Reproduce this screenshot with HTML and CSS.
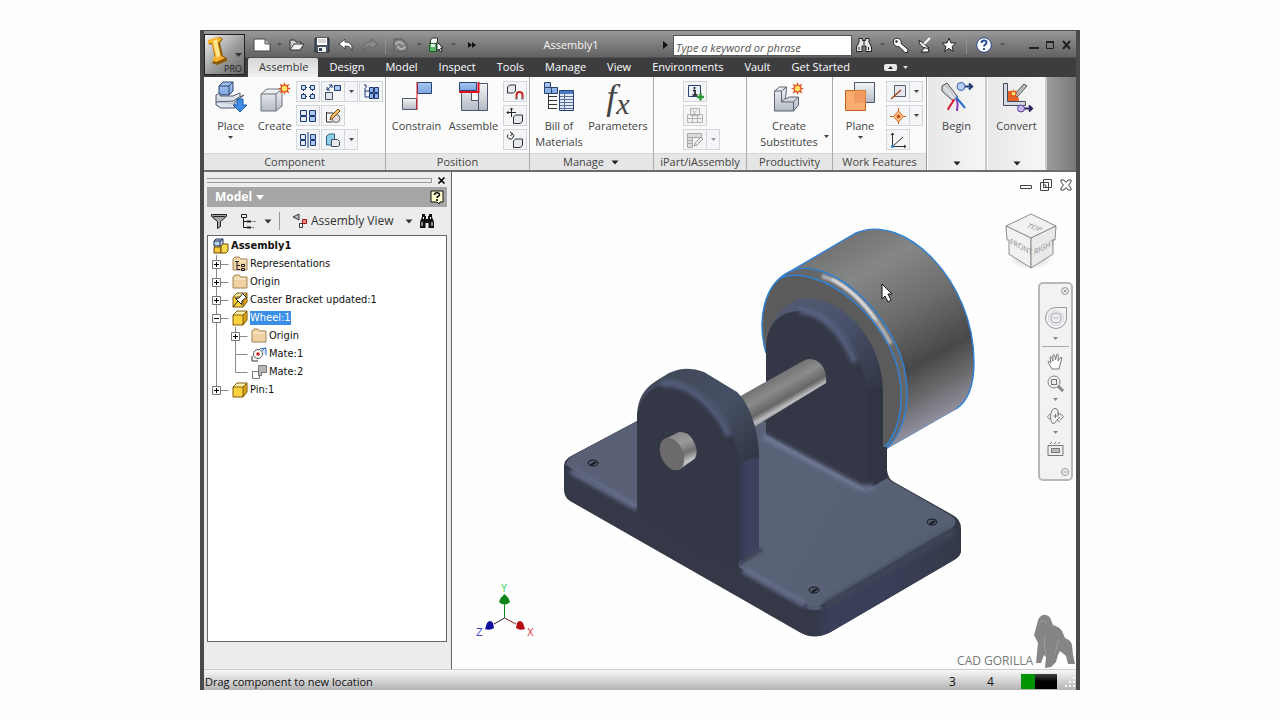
FILE: index.html
```html
<!DOCTYPE html>
<html lang="en">
<head>
<meta charset="utf-8">
<title>Assembly1</title>
<link rel="stylesheet" href="styles.css">
</head>
<body>
<svg class="defs" aria-hidden="true">
  <defs>
    <linearGradient id="cubeGray" x1="0" y1="0" x2="0" y2="1"><stop offset="0" stop-color="#f4f5f7"/><stop offset="1" stop-color="#b4bac4"/></linearGradient>
    <linearGradient id="blueFill" x1="0" y1="0" x2="0" y2="1"><stop offset="0" stop-color="#a9c8f2"/><stop offset="1" stop-color="#7ea6e0"/></linearGradient>
    <symbol id="dd" viewBox="0 0 7 5"><path d="M1 1h5L3.500 4z" fill="currentColor"/></symbol>
    <symbol id="burst" viewBox="0 0 12 12"><path d="M6 0l1.200 3L10.500 1.500 9 4.800 12 6 9 7.200l1.500 3.300L7.200 9 6 12 4.800 9l-3.300 1.500L3 7.200 0 6l3-1.200L1.500 1.500 4.800 3z" fill="#e0531c"/><circle cx="6" cy="6" r="2.500" fill="#ffe46a"/></symbol>
    <symbol id="part" viewBox="0 0 16 16"><path d="M1 5l4-4h10v9l-4 5H1z" fill="#fbd23c"/><path d="M1 5l4-4h10l-4 4z" fill="#fff3b0"/><path d="M11 5l4-4v9l-4 5z" fill="#dfa318"/><path d="M1 5l4-4h10v9l-4 5H1zM1 5h10v10M11 5l4-4" fill="none" stroke="#7c5c10"/></symbol>
    <symbol id="folder" viewBox="0 0 16 16"><path d="M1 14V3l2-2h4l2 2h6v11z" fill="#f0d3a2" stroke="#a08458"/><path d="M2 5h12" stroke="#fff2d8"/></symbol>
    <symbol id="binoc" viewBox="0 0 16 14"><path d="M3 0h3v2h1v3h2V2h1V0h3v3l2 5v6H9.500V9h-3v5H1V8l2-5z" fill="currentColor"/><path d="M3 8v4M13 8v4M4.500 3v2M11.500 3v2" stroke="#fff"/></symbol>
    <symbol id="plusbox" viewBox="0 0 24 18"><path d="M8.500 0v18M8.500 9.500h12" stroke="#8c8c8c"/><path d="M4.500 5.500h8v8h-8z" fill="#fff" stroke="#777"/><path d="M6 9.500h5M8.500 7v5" stroke="#000"/></symbol>
  </defs>
</svg>
<div class="stage">
<main class="app">
  <header class="head">
    <button class="app-btn" aria-label="Application menu">
      <svg viewBox="0 0 39 38" width="39" height="38"><path d="M4 5l11-4 3 2-3 4 3 13 4 2v3l-10 4-5-2 3-4L7 8 4 9z" fill="#8a5a08"/><path d="M3 4l10-3 4 2-4 4 3 13 4 2-9 4-4-2 3-4L7 7 3 8z" fill="#fbb42c"/><path d="M8 5l4-2 3 17-3 2z" fill="#ffe690"/><path d="M30 17h7l-3.500 4z" fill="#333"/></svg>
      <span>PRO</span>
    </button>
    <div class="title">
      <button class="w22" aria-label="New"><svg width="18" height="14" viewBox="0 0 18 14"><path d="M1 1h11l5 5v7H1z" fill="#fff" stroke="#444"/><path d="M12 1v5h5" fill="#bbb" stroke="#555"/></svg></button>
      <button class="w12 dim" aria-label="New options"><svg width="7" height="5"><use href="#dd"/></svg></button>
      <button class="w24" aria-label="Open"><svg width="16" height="14" viewBox="0 0 16 14"><path d="M1 12V2h5l1 2h5v3" fill="#ccc" stroke="#333"/><path d="M1 12l4-6h10l-4 6z" fill="#f4f4f4" stroke="#333"/></svg></button>
      <button class="w26" aria-label="Save"><svg width="16" height="16" viewBox="0 0 16 16"><path d="M1 1h14v14H1z" fill="#4a5464" stroke="#222b38"/><path d="M3 1h10v7H3z" fill="#fff"/><path d="M4 3h8M4 5h8" stroke="#aaa"/><path d="M4 10h8v5H4z" fill="#eee"/><path d="M5 11h3v3H5z" fill="#334055"/></svg></button>
      <button class="w22" aria-label="Undo"><svg width="16" height="14" viewBox="0 0 16 14"><path d="M7 1v3c5 0 8 3 7 9-1-4-3-5-7-5v3L1 6z" fill="#fff" stroke="#444"/></svg></button>
      <button class="w26" aria-label="Redo"><svg width="16" height="14" viewBox="0 0 16 14"><path d="M9 1v3C4 4 1 7 2 13c1-4 3-5 7-5v3l6-5z" fill="#8c8c8c" stroke="#666"/></svg></button>
      <span class="sep"></span>
      <button class="w24" aria-label="Update"><svg width="16" height="14" viewBox="0 0 16 14"><path d="M1 1h8l5 5v7H1z" fill="#7d7d7d" stroke="#5c5c5c"/><path d="M3 7c0-4 6-4 7 0M12 8c-1 4-6 4-7 0" fill="none" stroke="#b0b0b0" stroke-width="2"/></svg></button>
      <button class="w12 dim" aria-label="Update options"><svg width="7" height="5"><use href="#dd"/></svg></button>
      <button class="w22" aria-label="Select"><svg width="16" height="16" viewBox="0 0 16 16"><path d="M2.500 3l2-2h5v9h-7z" fill="#f4f4f4" stroke="#333"/><path d="M1.500 6.500h7v8h-7z" fill="#58b868" stroke="#1c5a26"/><path d="M3 7h4v3H3z" fill="#e8f4e8"/><path d="M9 5v9l2-2 1.500 3 1.500-1-1.500-3H15z" fill="#fff" stroke="#222"/></svg></button>
      <button class="w12 dim" aria-label="Select options"><svg width="7" height="5"><use href="#dd"/></svg></button>
      <button class="w26" aria-label="More"><svg width="8" height="6" viewBox="0 0 8 6"><path d="M0 0l4 3-4 3zM4 0l4 3-4 3z" fill="#111"/></svg></button>
      <h1>Assembly1</h1>
      <button class="w16" aria-label="Toggle search"><svg width="5" height="8" viewBox="0 0 5 8"><path d="M0 0l5 4-5 4z" fill="#111"/></svg></button>
      <input class="search" type="search" aria-label="Search" placeholder="Type a keyword or phrase">
      <button class="w24" aria-label="Find"><svg width="16" height="14" viewBox="0 0 16 14"><path d="M3 .5h3.500v2h3v-2H13V4l2.500 5v4.500H10V8H6v5.500H.5V9L3 4z" fill="#e6e6e6" stroke="#222"/><path d="M3 9v3M12.500 9v3M8 3v4" stroke="#222"/></svg></button>
      <button class="w12 dim" aria-label="Find options"><svg width="7" height="5"><use href="#dd"/></svg></button>
      <button class="w26" aria-label="Subscription"><svg width="18" height="16" viewBox="0 0 18 16"><path d="M1.500 4C2 1 6 .5 8 2.500c1.500 1.500 1.300 3 1 4l7 6-.5 3h-2.500L7 9.500C3 10 1 7 1.500 4z" fill="#fff" stroke="#222"/><circle cx="4.500" cy="4.500" r="1.200" fill="#222"/></svg></button>
      <button class="w22" aria-label="Communication"><svg width="14" height="16" viewBox="0 0 14 16"><path d="M1 3c0 6 5 9 10 8zM7 10l-4 5h8l-1-4" fill="#f4f4f4" stroke="#222"/><path d="M6 7l6-6" stroke="#fff" stroke-width="2"/></svg></button>
      <button class="w26" aria-label="Favorites"><svg width="16" height="16" viewBox="0 0 16 16"><path d="M8 1l2 5h5l-4 3.500 1.500 5L8 11.500l-4.500 3 1.500-5L1 6h5z" fill="#fff" stroke="#222"/></svg></button>
      <span class="sep gap"></span>
      <button class="w24" aria-label="Help"><svg width="16" height="16" viewBox="0 0 16 16"><circle cx="8" cy="8" r="7.300" fill="#fff" stroke="#27468a"/><path d="M5.500 6c0-3.500 5-3 5-.5C10.500 7.500 8 7.500 8 9.500M8 11v2" fill="none" stroke="#27509c" stroke-width="2"/></svg></button>
      <button class="w12 dim" aria-label="Help options"><svg width="7" height="5"><use href="#dd"/></svg></button>
      <span class="win">
        <button aria-label="Minimize"><svg width="10" height="9" viewBox="0 0 10 9"><path d="M0 7h10v2H0z" fill="#222"/></svg></button>
        <button aria-label="Maximize"><svg width="8" height="8" viewBox="0 0 8 8"><path d="M.5 1h7v6.500h-7z" fill="none" stroke="#222"/><path d="M0 1h8" stroke="#222" stroke-width="2"/></svg></button>
        <button aria-label="Close"><svg width="9" height="8" viewBox="0 0 9 8"><path d="M1 0l7 8M8 0L1 8" stroke="#222" stroke-width="2"/></svg></button>
      </span>
    </div>
    <nav class="tabs">
      <a class="on" href="#">Assemble</a><a href="#">Design</a><a href="#">Model</a><a href="#">Inspect</a><a href="#">Tools</a><a href="#">Manage</a><a href="#">View</a><a href="#">Environments</a><a href="#">Vault</a><a href="#">Get Started</a>
      <button class="collapse" aria-label="Collapse ribbon"><svg width="24" height="8" viewBox="0 0 24 8"><rect x="0" y="0" width="13" height="7" rx="2" fill="#e8e8e8"/><path d="M4 5l2.500-3L9 5z" fill="#222"/><path d="M19 2h5l-2.500 3z" fill="#ddd"/></svg></button>
    </nav>
  </header>

  <section class="ribbon">
    <section class="panel component">
      <div class="tools">
        <button class="big"><svg viewBox="0 0 32 32"><path d="M4 5l4-4h10v9l-4 4H4z" fill="url(#blueFill)" stroke="#28426f"/><path d="M4 5h10v9M14 5l4-4" fill="none" stroke="#28426f"/><path d="M1 14l4-2v3h13l7-3v4l4-2-9 7v4H5l-4-4z" fill="url(#cubeGray)" stroke="#4d5870"/><path d="M1 21l17-1 8-5M1 21v3l5 3h14v-3" fill="#dfe5ef" stroke="#4d5870"/><path d="M22 18h6v6h4l-7 7-7-7h4z" fill="#3d8de6" stroke="#1c5aa8"/></svg><span>Place</span><svg class="arrow"><use href="#dd"/></svg></button>
        <button class="big"><svg viewBox="0 0 32 32"><path d="M2 13l6-5h15v17l-6 5H2z" fill="url(#cubeGray)"/><path d="M2 13l6-5h15v17l-6 5H2zM2 13h15v17M17 13l6-5" fill="none" stroke="#6c727c"/><use href="#burst" x="19" y="1" width="13" height="13"/></svg><span>Create</span></button>
        <div class="stack">
          <div><button class="sm" aria-label="Pattern"><svg viewBox="0 0 18 18"><g fill="#cfe0f6" stroke="#1e3a74"><path d="M2.500 2.500h4v4h-4zM11.500 2.500h4v4h-4zM2.500 11.500h4v4h-4zM11.500 11.500h4v4h-4z"/></g><path d="M7 4.500h1M10 4.500h1M7 13.500h1M10 13.500h1M4.500 7v1M4.500 10v1M13.500 7v1M13.500 10v1" stroke="#1e3a74"/></svg></button><button class="sm" aria-label="Move"><svg viewBox="0 0 18 18"><path d="M1.500 9.500h7v7h-7z" fill="#dfe4ec" stroke="#444b5c"/><path d="M10.500 2.500h6v5h-6z" fill="#a9c8f2" stroke="#1e3a74"/><path d="M3 7l5-5M5 2h3v3M3 4v3h3" fill="none" stroke="#1e3a74"/></svg></button><button class="dd" aria-label="Move options"><svg class="arrow"><use href="#dd"/></svg></button><button class="sm" aria-label="Structure"><svg viewBox="0 0 18 18"><path d="M3 5v9h5M3 8h5M2 2h2v3" fill="none" stroke="#1e3a74"/><path d="M7.500 4.500h4v5h-4zM12.500 4.500h4v5h-4zM7.500 10.500h4v5h-4zM12.500 10.500h4v5h-4z" fill="#8fb2e6" stroke="#1e3a74"/></svg></button></div>
          <div><button class="sm" aria-label="Copy"><svg viewBox="0 0 18 18"><path d="M1.500 3.500h6v5h-6zM1.500 9.500h6v5h-6z" fill="#e4eaf4" stroke="#1e3a74"/><path d="M10.500 3.500h6v5h-6zM10.500 9.500h6v5h-6z" fill="#a9c8f2" stroke="#1e3a74"/></svg></button><button class="sm" aria-label="Sketch"><svg viewBox="0 0 18 18"><path d="M2.500 5v10M2.500 6h7M2.500 15h6" stroke="#333" fill="none"/><circle cx="12" cy="11.500" r="4" fill="#ddd" stroke="#666"/><path d="M6 13l1-4 7-7 2 2-7 7z" fill="#f6c46a" stroke="#7a4d14"/></svg></button></div>
          <div><button class="sm" aria-label="Mirror"><svg viewBox="0 0 18 18"><path d="M1.500 3.500h5v5h-5zM1.500 9.500h5v5h-5z" fill="#e4eaf4" stroke="#1e3a74"/><path d="M11.500 3.500h5v5h-5zM11.500 9.500h5v5h-5z" fill="#a9c8f2" stroke="#1e3a74"/><path d="M9 1v16" stroke="#1e3a74"/></svg></button><button class="sm" aria-label="Shrinkwrap"><svg viewBox="0 0 18 18"><path d="M2.500 5l3-2h5v11h-8z" fill="#8fd0e8" stroke="#2a5f80"/><path d="M7.500 8.500h6l2 2v4l-2 1h-6z" fill="#e6e9ef" stroke="#444b5c"/></svg></button><button class="dd" aria-label="Shrinkwrap options"><svg class="arrow"><use href="#dd"/></svg></button></div>
        </div>
      </div>
      <h2>Component</h2>
    </section>
    <section class="panel position">
      <div class="tools">
        <button class="big"><svg viewBox="0 0 32 32"><path d="M1.500 17.500h14v11h-14z" fill="url(#cubeGray)" stroke="#4d5870"/><path d="M16.500 1.500h14v11h-14z" fill="url(#blueFill)" stroke="#28426f"/><path d="M16 1v28" stroke="#e01020"/></svg><span>Constrain</span></button>
        <button class="big"><svg viewBox="0 0 32 32"><path d="M3.500 10.500h10v9h7v-17h9v27h-26z" fill="url(#cubeGray)" stroke="#4d5870"/><path d="M13.500 14v5.500h7v10" fill="none" stroke="#4d5870"/><path d="M1.500 1.500h17v8h-17z" fill="url(#blueFill)" stroke="#28426f"/><path d="M1 11h19.500V1" fill="none" stroke="#e01020" stroke-width="2"/></svg><span>Assemble</span></button>
        <div class="stack">
          <div><button class="sm" aria-label="Grip snap"><svg viewBox="0 0 18 18"><path d="M1.500 4l2-2h6v6l-2 2h-6z" fill="#e6e9ef" stroke="#333"/><path d="M10.500 16v-4a3 3 0 0 1 6 0v4" fill="none" stroke="#c22a22" stroke-width="2"/><path d="M9 15.500h3M15 15.500h3" stroke="#888" stroke-width="2"/></svg></button></div>
          <div><button class="sm" aria-label="Move component"><svg viewBox="0 0 18 18"><path d="M7.500 10l2-2h7v6l-2 2.500h-7z" fill="#e6e9ef" stroke="#333"/><path d="M5.500 1v9M1 5.500h9M4 2.500l1.500-1.500L7 2.500M2.500 4L1 5.500 2.500 7" fill="none" stroke="#222"/></svg></button></div>
          <div><button class="sm" aria-label="Rotate component"><svg viewBox="0 0 18 18"><path d="M7.500 10l2-2h7v6l-2 2.500h-7z" fill="#e6e9ef" stroke="#333"/><path d="M6 2.500a3 3 0 1 1-4 1M4 1l2.500 1.500L4.500 5" fill="none" stroke="#222"/></svg></button></div>
        </div>
      </div>
      <h2>Position</h2>
    </section>
    <section class="panel manage">
      <div class="tools">
        <button class="big"><svg viewBox="0 0 32 32"><path d="M1.500 6.500h7v6h-7zM1.500 1.500h6v5h-6zM8.500 6.500h6v6h-6z" fill="url(#blueFill)" stroke="#28426f"/><path d="M5.500 13v15M6 15.500h8M6 19.500h8M6 23.500h8M6 27.500h8" stroke="#333"/><path d="M16.500 9.500h14v20h-14z" fill="#dfe9f8" stroke="#28426f"/><path d="M17 11.500h13" stroke="#4a77c4" stroke-width="3"/><path d="M17 15.500h13M17 18.500h13M17 21.500h13M17 24.500h13M17 27.500h13M21.500 13v16" stroke="#5a7098"/></svg><span>Bill of<br>Materials</span></button>
        <button class="big wide"><span class="fx">f<sub>x</sub></span><span>Parameters</span></button>
      </div>
      <h2>Manage <svg class="arrow lg"><use href="#dd"/></svg></h2>
    </section>
    <section class="panel ipart">
      <div class="tools mid">
        <div class="stack">
          <div><button class="sm" aria-label="Create iPart"><svg viewBox="0 0 18 18"><path d="M2.500 2.500h12v11h-12z" fill="#eaf0f8" stroke="#28426f"/><path d="M8.500 4v2M7 7.500h2V12M6.500 12h5" fill="none" stroke="#111" stroke-width="1.500"/><path d="M14.500 10.500v7M11 14h7" stroke="#2b9a34" stroke-width="2.500"/></svg></button></div>
          <div><button class="sm" aria-label="Edit table" disabled><svg viewBox="0 0 18 18"><path d="M4.500 1.500h9v7h-9zM1.500 7.500h15v8h-15zM1.500 11.500h15M6.500 8v8M11.500 8v8M6 3l5 5M11 3L6 8" fill="#f0f0f0" stroke="#b4b4b4"/></svg></button></div>
          <div><button class="sm" aria-label="Edit scope" disabled><svg viewBox="0 0 18 18"><path d="M1.500 2.500h14v4h-14zM1.500 6.500h5v10h-5zM2 9.500h4M2 12.500h4" fill="#ddd" stroke="#aaa"/><path d="M8 15l1-3 6-6 2 2-6 6z" fill="#eee" stroke="#999"/></svg></button><button class="dd off" aria-label="Scope options" disabled><svg class="arrow"><use href="#dd"/></svg></button></div>
        </div>
      </div>
      <h2>iPart/iAssembly</h2>
    </section>
    <section class="panel productivity">
      <div class="tools">
        <button class="big full"><svg viewBox="0 0 32 32"><path d="M1.500 10l5-4h7l-1 12 4-2h9v8l-5 6h-19z" fill="url(#cubeGray)" stroke="#5a6270"/><path d="M1.500 10h7v11h12v9M8.500 10l5-4M8.500 21l4-4M20.500 21l5-5" fill="none" stroke="#5a6270"/><use href="#burst" x="18" y="1" width="13" height="13"/></svg><span>Create<br>Substitutes</span></button>
        <button class="side" aria-label="Substitute options"><svg class="arrow"><use href="#dd"/></svg></button>
      </div>
      <h2>Productivity</h2>
    </section>
    <section class="panel work">
      <div class="tools">
        <button class="big"><svg viewBox="0 0 32 32"><path d="M10.500 1.500h20v20h-20z" fill="url(#cubeGray)" stroke="#4d5870"/><path d="M1.500 9.500h20v20h-20z" fill="#f9a868" fill-opacity=".94" stroke="#c8601c"/><path d="M10.500 9.500h11v12h-11z" fill="#f29a60"/></svg><span>Plane</span><svg class="arrow"><use href="#dd"/></svg></button>
        <div class="stack">
          <div><button class="sm" aria-label="Axis"><svg viewBox="0 0 18 18"><path d="M5.500 2.500h11v11h-11z" fill="#e4e8ee" stroke="#5a6270"/><path d="M2 16L12 7" stroke="#a8481c" stroke-width="1.500"/></svg></button><button class="dd" aria-label="Axis options"><svg class="arrow"><use href="#dd"/></svg></button></div>
          <div><button class="sm" aria-label="Point"><svg viewBox="0 0 18 18"><path d="M1 9.500h16M9.500 1v16" stroke="#c8601c"/><path d="M9.500 4l5 5.500-5 5.500-5-5.500z" fill="#ffc98c" stroke="#d4641c"/><circle cx="9.500" cy="9.500" r="2" fill="#c8501c"/></svg></button><button class="dd" aria-label="Point options"><svg class="arrow"><use href="#dd"/></svg></button></div>
          <div><button class="sm" aria-label="UCS"><svg viewBox="0 0 18 18"><path d="M3.500 15.500V2M2 4l1.500-2L5 4M3.500 15.500H17M15 14l2 1.500-2 1.500M4 15L14 6" fill="none" stroke="#333"/><circle cx="3.500" cy="15.500" r="1.500" fill="#2f7fd6"/></svg></button></div>
        </div>
      </div>
      <h2>Work Features</h2>
    </section>
    <section class="panel solo">
      <button class="big full"><svg viewBox="0 0 32 32"><path d="M1 5l5-3 11 14-5 4L1 10z" fill="#c9cdd4" stroke="#555"/><path d="M3 6l11 13" stroke="#fff"/><path d="M13 18c-1 5-5 6-6 11" stroke="#d42030" stroke-width="2" fill="none"/><path d="M15 18c3 4 1 8 1 12" stroke="#8a3ab8" stroke-width="2" fill="none"/><path d="M15 16l9 11" stroke="#2a70c8" stroke-width="2"/><path d="M24 5.500h8M28 2.500l3 3-3 3" stroke="#1e3a74" stroke-width="2" fill="none"/><circle cx="20" cy="5.500" r="4" fill="#b5d0f4" stroke="#3563a8"/></svg><span>Begin</span></button>
      <button class="expand" aria-label="Begin options"><svg class="arrow lg"><use href="#dd"/></svg></button>
    </section>
    <section class="panel solo">
      <button class="big full"><svg viewBox="0 0 32 32"><path d="M2.500 2.500h4v18h18v4h-22z" fill="#d5d9e0" stroke="#444b5c"/><path d="M7 10c6 0 11 4 11 10H7z" fill="#e8602c"/><path d="M13 14L23 3l3 2-10 11z" fill="#bbb" stroke="#555"/><use href="#burst" x="8" y="8" width="9" height="9"/><path d="M23 27.500h8M28 24.500l3 3-3 3" stroke="#2b2260" stroke-width="2" fill="none"/><circle cx="20" cy="27.500" r="3.500" fill="#c9b5f0" stroke="#5c3fa0"/></svg><span>Convert</span></button>
      <button class="expand" aria-label="Convert options"><svg class="arrow lg"><use href="#dd"/></svg></button>
    </section>
  </section>

  <div class="work-area">
    <aside class="browser">
      <div class="grip"><i></i><button aria-label="Close browser"><svg width="7" height="7" viewBox="0 0 7 7"><path d="M.5.5l6 6M6.500.5l-6 6" stroke="#000" stroke-width="1.600"/></svg></button></div>
      <div class="bhead"><button class="model">Model <svg width="8" height="5" viewBox="0 0 8 5"><path d="M0 0h8L4 5z" fill="#fff"/></svg></button><button class="bhelp" aria-label="Browser help"><svg width="14" height="15" viewBox="0 0 14 15"><path d="M1 1h12v11h-3l-1 2-2-2H1z" fill="#ffffd0" stroke="#111"/><path d="M4.500 5c0-3 5-3 5 0C9.500 6.500 7 6 7 8M7 9v2" fill="none" stroke="#111" stroke-width="1.600"/></svg></button></div>
      <div class="btools">
        <button class="w22" aria-label="Filter"><svg width="16" height="15" viewBox="0 0 16 15"><path d="M.5.5h15v2l-6 5v5l-3 2v-7l-6-5z" fill="#a4a4a4" stroke="#222"/><path d="M2 2.500h12" stroke="#222"/></svg></button>
        <button class="w36" aria-label="Tree display"><svg width="16" height="15" viewBox="0 0 16 15"><path d="M1.500.5h5v3h-5zM3.500 4v9.500h4M3.500 7.500h4" fill="none" stroke="#222"/><path d="M7 6.500h4v2H7zM7 12.500h4v2H7z" fill="#222"/><path d="M11.500 7.500H16M11.500 13.500H14" stroke="#888"/></svg></button>
        <button class="w16" aria-label="Display options"><svg width="10" height="7"><use href="#dd"/></svg></button>
        <span class="bar"></span>
        <label class="view"><svg width="16" height="16" viewBox="0 0 16 16"><path d="M1 4l6-3v6z" fill="#bbb" stroke="#333"/><path d="M7.500 10.500h3v4h-3z" fill="#fff" stroke="#333"/><path d="M10.500 6.500h4v4h-4z" fill="#e88" stroke="#a01818"/></svg><select aria-label="Browser view"><option>Assembly View</option></select><svg width="10" height="7"><use href="#dd"/></svg></label>
        <button class="w26 find" aria-label="Find"><svg width="16" height="14"><use href="#binoc"/></svg></button>
      </div>
      <ul class="tree">
        <li class="root"><svg class="ic" viewBox="0 0 16 16"><path d="M1 3l2-2h7v7H1z" fill="#b8d2f4" stroke="#1c2c50"/><path d="M1 3h6v5M7 3l3-2" fill="none" stroke="#1c2c50"/><path d="M1 9h7v6H1z" fill="#f7c63a" stroke="#6d4e08"/><path d="M8 8l2-2h5v7l-2 2H8z" fill="#ffd84c" stroke="#6d4e08"/></svg><b>Assembly1</b></li>
        <li><svg class="g"><use href="#plusbox"/></svg><svg class="ic" viewBox="0 0 16 16"><use href="#folder"/><path d="M3 5.500h4M5 6v7.500h3M5 9.500h3M9.500 8.500h3v2h-3zM9.500 12.500h3v2h-3z" fill="none" stroke="#222"/></svg><span>Representations</span></li>
        <li><svg class="g"><use href="#plusbox"/></svg><svg class="ic"><use href="#folder"/></svg><span>Origin</span></li>
        <li><svg class="g"><use href="#plusbox"/></svg><svg class="ic" viewBox="0 0 16 16"><use href="#part"/><path d="M1 15l5-6M3.500 6.500l6 6 .5-3.500L13.500 6l1-.5-4-4-.5 1L7 6z" fill="#fff" stroke="#222"/></svg><span>Caster Bracket updated:1</span></li>
        <li><svg class="g" viewBox="0 0 24 18"><path d="M8.500 0v18M8.500 9.500h12" stroke="#8c8c8c"/><path d="M4.500 5.500h8v8h-8z" fill="#fff" stroke="#777"/><path d="M6 9.500h5" stroke="#000"/></svg><svg class="ic"><use href="#part"/></svg><span class="sel">Wheel:1</span></li>
        <li><svg class="g g2" viewBox="0 0 43 18"><path d="M8.500 0v18" stroke="#8c8c8c"/><use href="#plusbox" x="19" width="24" height="18"/></svg><svg class="ic"><use href="#folder"/></svg><span>Origin</span></li>
        <li><svg class="g g2" viewBox="0 0 43 18"><path d="M8.500 0v18M27.500 0v18M27.500 9.500h12" stroke="#8c8c8c"/></svg><svg class="ic" viewBox="0 0 16 16"><path d="M9 2.500h6v7" fill="#cfe0f6" stroke="#3a78c8"/><path d="M1 10v5h6" fill="none" stroke="#333"/><circle cx="7" cy="8" r="4.500" fill="#fff" stroke="#555"/><circle cx="7" cy="8" r="1.800" fill="#d02020"/><path d="M11 5l4-4" stroke="#3a78c8"/></svg><span>Mate:1</span></li>
        <li><svg class="g g2" viewBox="0 0 43 18"><path d="M8.500 0v18M27.500 0v9.500h12" fill="none" stroke="#8c8c8c"/></svg><svg class="ic" viewBox="0 0 16 16"><path d="M1.500 7.500h7v7h-7z" fill="#fff" stroke="#777"/><path d="M7.500 1.500h8v7h-5v3h-3z" fill="#b4b4b4" stroke="#777"/></svg><span>Mate:2</span></li>
        <li><svg class="g" viewBox="0 0 24 18"><path d="M8.500 0v9M8.500 9.500h12" stroke="#8c8c8c"/><path d="M4.500 5.500h8v8h-8z" fill="#fff" stroke="#777"/><path d="M6 9.500h5M8.500 7v5" stroke="#000"/></svg><svg class="ic"><use href="#part"/></svg><span>Pin:1</span></li>
      </ul>
    </aside>

    <section class="canvas">
      <svg class="model3d" viewBox="453 172 624 497" role="img" aria-label="Caster bracket assembly">
        <defs>
          <linearGradient id="tread" gradientUnits="userSpaceOnUse" x1="828" y1="246" x2="928" y2="426"><stop offset="0" stop-color="#727272"/><stop offset=".2" stop-color="#858686"/><stop offset=".45" stop-color="#6e6e6e"/><stop offset=".72" stop-color="#48484a"/><stop offset=".86" stop-color="#6a6a6c"/><stop offset="1" stop-color="#9090a0"/></linearGradient>
          <linearGradient id="pin" gradientUnits="userSpaceOnUse" x1="772" y1="379" x2="789" y2="409"><stop offset="0" stop-color="#747474"/><stop offset=".35" stop-color="#8b8b8b"/><stop offset=".7" stop-color="#666"/><stop offset=".88" stop-color="#bdbdc0"/><stop offset="1" stop-color="#8a8a8c"/></linearGradient>
          <linearGradient id="stub" gradientUnits="userSpaceOnUse" x1="679" y1="433" x2="692" y2="466"><stop offset="0" stop-color="#888"/><stop offset=".3" stop-color="#9a9a9a"/><stop offset=".6" stop-color="#707070"/><stop offset=".85" stop-color="#c8c8cc"/><stop offset="1" stop-color="#888"/></linearGradient>
          <linearGradient id="top" gradientUnits="userSpaceOnUse" x1="600" y1="430" x2="900" y2="600"><stop offset="0" stop-color="#596076"/><stop offset=".5" stop-color="#5a6278"/><stop offset="1" stop-color="#566072"/></linearGradient>
          <linearGradient id="front" gradientUnits="userSpaceOnUse" x1="815" y1="0" x2="962" y2="0"><stop offset="0" stop-color="#343847"/><stop offset=".12" stop-color="#3a3f5a"/><stop offset=".5" stop-color="#3a3f58"/><stop offset="1" stop-color="#343949"/></linearGradient>
          <linearGradient id="sideFace" gradientUnits="userSpaceOnUse" x1="736" y1="0" x2="760" y2="0"><stop offset="0" stop-color="#2f3342"/><stop offset=".5" stop-color="#3c425e"/><stop offset="1" stop-color="#3c425c"/></linearGradient>
          <linearGradient id="arch" gradientUnits="userSpaceOnUse" x1="670" y1="370" x2="760" y2="460"><stop offset="0" stop-color="#424959"/><stop offset=".5" stop-color="#465064"/><stop offset="1" stop-color="#303443"/></linearGradient>
          <linearGradient id="arch2" gradientUnits="userSpaceOnUse" x1="790" y1="300" x2="884" y2="390"><stop offset="0" stop-color="#515a70"/><stop offset=".45" stop-color="#49526a"/><stop offset="1" stop-color="#303443"/></linearGradient>
          <filter id="s1" x="-20%" y="-20%" width="140%" height="140%"><feGaussianBlur stdDeviation="1"/></filter>
          <filter id="s2" x="-20%" y="-20%" width="140%" height="140%"><feGaussianBlur stdDeviation="2"/></filter>
        </defs>
        <path d="M790 272L857 233C905 212 975 280 975 362C975 388 968 402 957 409L887 449Z" fill="url(#tread)"/>
        <path d="M767 353C757 318 766 284 790 272C832 252 900 320 907 378C911 410 902 436 887 449L868 430Z" fill="#666769"/>
        <path d="M770 353C758 318 766 288 781 278C822 262 893 320 901 380C905 410 898 434 885 448L868 430Z" fill="#5b5b5b"/>
        <path d="M823 276C850 284 875 312 892 344" fill="none" stroke="#b4b4b8" stroke-width="4" filter="url(#s1)"/>
        <path d="M833 279C850 288 866 304 877 320" fill="none" stroke="#f0f0f2" stroke-width="2" filter="url(#s1)"/>
        <path d="M767 353C757 318 766 284 790 272L857 233C905 212 975 280 975 362C975 388 968 402 957 409M790 272C832 252 900 320 907 378C911 410 902 436 887 449M781 278C822 262 893 320 901 380C905 410 898 434 885 448" fill="none" stroke="#2f82d6" stroke-width="1.400"/>
        <path d="M957 409L887 449" stroke="#6f8fb8" fill="none"/>

        <path d="M565 466Q565 460 572 456L638 421L740 398L888 470Q889 479 895 482L952 514Q962 519 962 528V550Q962 556 955 560L830 633Q815 640 802 633L571 501Q565 497 565 490Z" fill="#343847"/>
        <path d="M567 465Q567 459 577 454L640 420L762 420L884 475Q890 480 895 483L951 515Q961 521 953 528L822 605Q815 609 807 604L740 567L640 509Z" fill="url(#top)"/>
        <path d="M816 610L956 531Q962 527 962 530V550Q962 556 955 560L830 633L816 636Z" fill="url(#front)"/>
        <path d="M826 606L955 531" stroke="#3c4456" stroke-width="8" filter="url(#s2)"/>
        <path d="M572 471L638 508M744 570L806 605" stroke="#6a7392" stroke-width="5" filter="url(#s2)" fill="none"/>
        <path d="M808 606Q815 611 822 607" stroke="#59627a" stroke-width="4" filter="url(#s1)" fill="none"/>

        <path d="M767 353C767 320 785 303 803 298C848 296 884 345 884 390V447H888V478L868 490L767 436Z" fill="url(#arch2)"/>
        <path d="M767 345C769 318 787 310 805 311C840 318 866 360 868 390V490L767 434Z" fill="#343745"/>
        <path d="M868 385V489L888 478V447H884V392Z" fill="#303443"/>
        <path d="M869 395V484" stroke="#2a2e3b" stroke-width="4" filter="url(#s1)"/>
        <path d="M800 310C825 312 845 335 856 362" fill="none" stroke="#5a6484" stroke-width="6" filter="url(#s2)"/>
        <path d="M764 436L860 487Q866 490 874 486" fill="none" stroke="#727b9a" stroke-width="5" filter="url(#s2)"/>

        <path d="M738 398L804 361C816 354 829 366 827 383L752 429Z" fill="url(#pin)"/>

        <path d="M638 510V414C639 398 645 389 657 381L670 373Q687 365 705 372L738 392C752 405 760 435 760 457V549L740 562L700 545Z" fill="url(#arch)"/>
        <path d="M638 510V418C640 397 653 386 671 383C706 384 739 430 740 462V569L700 552Z" fill="#343745"/>
        <path d="M741 462Q750 458 760 458V549L738 562V468Z" fill="url(#sideFace)"/>
        <path d="M662 384C690 380 720 410 730 436" fill="none" stroke="#566080" stroke-width="6" filter="url(#s2)"/>
        <path d="M739 455V560" stroke="#2b2f3c" stroke-width="4" filter="url(#s1)"/>
        <path d="M740 564L763 549" stroke="#3d4456" stroke-width="4" filter="url(#s1)"/>

        <path d="M664 440L680 432Q692 431 697 447Q699 457 694 460L680 470Z" fill="url(#stub)"/>
        <ellipse cx="673" cy="454" rx="11" ry="17" transform="rotate(-24 673 454)" fill="#6c6a6a"/>
        <g fill="#505868" stroke="#15171d" stroke-width="1"><ellipse cx="594" cy="463" rx="5" ry="3"/><ellipse cx="933" cy="522" rx="5" ry="3"/><ellipse cx="815" cy="590" rx="5" ry="3"/><path d="M592 465l5-3M931 524l5-3M813 592l5-3" stroke-width="2"/></g>
        <path d="M883 284V299L886 296L889 302L892 300L889 294H893Z" fill="#fff" stroke="#111"/>
      </svg>

      <div class="mdi">
        <button aria-label="Minimize document"><svg width="12" height="12" viewBox="0 0 12 12"><path d="M.5 6.500h11v3H.5z" fill="#fff" stroke="#444"/></svg></button>
        <button aria-label="Restore document"><svg width="12" height="12" viewBox="0 0 12 12"><path d="M3.500.5h8v8h-8zM.5 3.500h8v8h-8zM3.500 6h2.500v2.500H3.500z" fill="#fff" stroke="#444"/></svg></button>
        <button aria-label="Close document"><svg width="12" height="12" viewBox="0 0 12 12"><path d="M1 1h3l2 2.500L8 1h3v2L8.500 6 11 9v2H8L6 8.500 4 11H1V9l2.500-3L1 3z" fill="#fff" stroke="#444"/></svg></button>
      </div>
      <svg class="cube" viewBox="0 0 56 60" width="56" height="60"><defs><radialGradient id="sh"><stop offset="0" stop-color="#888"/><stop offset="1" stop-color="#fff" stop-opacity="0"/></radialGradient></defs><ellipse cx="28" cy="47" rx="27" ry="13" fill="url(#sh)"/><g fill="#f1f1f1" stroke="#8c8c8c" stroke-linejoin="round"><path d="M28 3l25 12-25 12L3 15z"/><path d="M3 15l25 12v30L6 43V29H4z"/><path d="M53 15L28 27v30l22-14V29h2z" fill="#e9e9e9"/></g><g class="cube-txt"><text transform="matrix(.87 .45 0 1 7 33)">FRONT</text><text transform="matrix(.87 -.45 0 1 31 44)">RIGHT</text><text transform="matrix(.9 .3 -.6 .6 23 16)">TOP</text></g></svg>
      <div class="nav">
        <button aria-label="Close navigation bar"><svg width="10" height="10" viewBox="0 0 10 10"><circle cx="5" cy="5" r="3.500" fill="#eee" stroke="#999"/><path d="M3.500 3.500l3 3M6.500 3.500l-3 3" stroke="#999"/></svg></button>
        <button aria-label="Steering wheel"><svg width="24" height="24" viewBox="0 0 24 24"><path d="M12 1.500h10.500V12A10.500 10.500 0 1 1 12 1.500z" fill="#f3f3f6" stroke="#999"/><circle cx="12" cy="12" r="7.500" fill="none" stroke="#d4d4da"/><rect x="7" y="7" width="10" height="10" rx="4" fill="#ececf4" stroke="#a4a4b0"/><path d="M9 12h6" stroke="#bbb"/></svg></button>
        <button aria-label="Wheel options"><svg class="arrow"><use href="#dd"/></svg></button>
        <hr>
        <button aria-label="Pan"><svg width="17" height="17" viewBox="0 0 17 17"><path d="M5 16L1 9Q1 7 4 10L3 4Q4 2 6 8L6 2Q8 0 8.500 7L10 1Q12 1 11 8L14 4Q16 4 14 8L12 16z" fill="#fff" stroke="#777"/></svg></button>
        <button aria-label="Zoom"><svg width="17" height="17" viewBox="0 0 17 17"><circle cx="7" cy="7" r="6" fill="#eee" stroke="#888"/><rect x="4.500" y="4.500" width="5" height="5" fill="none" stroke="#777"/><path d="M11 11l5 5" stroke="#888" stroke-width="3"/></svg></button>
        <button aria-label="Zoom options"><svg class="arrow"><use href="#dd"/></svg></button>
        <button aria-label="Orbit"><svg width="17" height="17" viewBox="0 0 17 17"><path d="M6 15.500c-4-2-3-15 2-15 3 0 4 4 3 8M3 6C0 8 0 10 3 11M10 5.500c7 1 8 4 3 6M13 9l-3 3 3 2M5.500 15.500c2 0 3-1 4-3M8.500 6v4M6.500 8h4" fill="none" stroke="#777"/></svg></button>
        <button aria-label="Orbit options"><svg class="arrow"><use href="#dd"/></svg></button>
        <button aria-label="Look at"><svg width="17" height="15" viewBox="0 0 17 15"><path d="M1 4.500h15v10H1z" fill="#eee" stroke="#777"/><path d="M4.500 7.500h8v4h-8z" fill="#bbb" stroke="#777"/><path d="M3 3l2-2M7 3l2-2M11 3l2-2" stroke="#777"/></svg></button>
        <button aria-label="Navigation options"><svg width="10" height="10" viewBox="0 0 10 10"><circle cx="5" cy="5" r="3.500" fill="#eee" stroke="#999"/><path d="M3.500 5h3" stroke="#999"/></svg></button>
      </div>
      <svg class="triad" viewBox="0 0 62 58" width="62" height="58"><path d="M30.500 34V18" stroke="#0a8a1a"/><path d="M30.500 34L20 40" stroke="#222244"/><path d="M30.500 34L42 40" stroke="#802020"/><path d="M30.500 10q4 3 5.500 8-5.500 5-11 0 1.500-5 5.500-8z" fill="#0c8418"/><path d="M11 45l2-6q3-4 6 0l1 5q-4 3-9 1z" fill="#0d0da0"/><path d="M51 45l-2-6q-3-4-6 0l-1 5q4 3 9 1z" fill="#b40c10"/><text x="27" y="8" fill="#46d860">Y</text><text x="2" y="52" fill="#4444cc">Z</text><text x="53" y="52" fill="#e04444">X</text></svg>
      <div class="mark"><span>CAD GORILLA</span><svg width="42" height="55" viewBox="0 0 42 55"><path d="M5 6Q8 0 13 1Q17 2 18 6L20 11Q27 13 29 17L32 24Q38 26 39 31L40 41L42 50L35 50L33 42L27 37L25 41L23 48L18 53L12 54L13 43L11 41L8 49L3 49L5 29L1 21L3 14Z" fill="#858585"/><path d="M7 8q4-3 7 2M26 25l-4 14M12 22q-2 9 1 19" fill="none" stroke="#9c9c9c"/></svg></div>
    </section>
  </div>

  <footer class="status"><span class="msg">Drag component to new location</span><span class="n">3</span><span class="n">4</span><i class="meter"></i><svg width="10" height="10" viewBox="0 0 10 10"><path d="M8 0h2v2H8zM8 4h2v2H8zM8 8h2v2H8zM4 4h2v2H4zM4 8h2v2H4zM0 8h2v2H0z" fill="#f8f8f8"/></svg></footer>
</main>
</div>
</body>
</html>
```
FILE: styles.css
```css
* { box-sizing: border-box; }
body { margin: 0; background: #fefefe; font: 11px/16px "Open Sans", "Noto Sans", sans-serif; color: #333; }
button { border: 0; padding: 0; margin: 0; background: none; font: inherit; color: inherit; display: flex; align-items: center; justify-content: center; }
svg { display: block; flex: none; overflow: visible; }
h1, h2 { margin: 0; font: inherit; }
.defs { position: absolute; width: 0; height: 0; }
.stage { display: flex; min-height: 100vh; padding: 30px 200px; }
.app { flex: 1; min-width: 0; display: flex; flex-direction: column; border: solid #4a4a4a; border-width: 1px 4px 0; }
.arrow { width: 7px; height: 5px; color: #444; }
.arrow.lg { width: 10px; height: 7px; color: #222; }
.w12 { width: 12px; }
.w16 { width: 16px; }
.w22 { width: 22px; }
.w24 { width: 24px; }
.w26 { width: 26px; }
.w36 { width: 36px; }
.dim { color: #555; }

.head { display: grid; grid-template-columns: 42px 1fr; grid-template-rows: 27px 19px; background: linear-gradient(#989898, #626262 26px, #3d3d3f 27px); }
.app-btn { grid-row: 1 / 3; display: grid; width: 41px; height: 41px; margin: 3px 0 0; border: 1px solid #222; background: linear-gradient(135deg, #f2f2f2, #9a9a9a 55%, #6a6a6a); }
.app-btn svg, .app-btn span { grid-area: 1 / 1; }
.app-btn span { align-self: end; justify-self: end; font-size: 9px; line-height: 11px; color: #222; padding-right: 2px; }
.title { display: flex; align-items: center; padding: 0 2px 0 5px; }
.title .sep { width: 1px; height: 18px; margin: 0 3px 0 2px; background: #8d8d8d; }
.title .sep.gap { margin: 0 5px 0 4px; }
.title h1 { flex: 1; text-align: center; color: #f4f4f4; }
.search { width: 179px; height: 21px; margin-top: 2px; padding: 4px 2px 0; border: 1px solid #555; border-radius: 0; background: #fff; font: italic 11px/16px "Open Sans", sans-serif; outline: 0; appearance: none; }
.search::placeholder { color: #555; opacity: 1; }
.win { display: flex; margin-left: 18px; }
.win button { width: 16px; height: 18px; }
.tabs { display: flex; color: #fff; padding-left: 2px; align-items: stretch; }
.tabs a { padding: 0 10px 0 11px; color: inherit; text-decoration: none; line-height: 18px; white-space: nowrap; }
.tabs .on { background: linear-gradient(#d6d6d6, #f2f2f2); color: #333; border-radius: 2px 2px 0 0; }
.collapse { margin-left: 24px; }

.ribbon { display: flex; height: 95px; background: linear-gradient(90deg, #999 97%, #777); border-bottom: 2px solid #6d6d6d; }
.panel { display: flex; flex-direction: column; border-right: 1px solid #aaa; background: #fbfbfb; flex: none; }
.tools { flex: 1; display: flex; padding: 4px 2px 0; }
.tools.mid { padding-left: 28px; }
.panel h2 { height: 17px; line-height: 18px; background: #e6e6e6; border-top: 1px solid #d8d8d8; display: flex; gap: 6px; align-items: center; justify-content: center; color: #444; white-space: nowrap; }
.component { width: 182px; }
.position { width: 144px; }
.manage { width: 124px; }
.ipart { width: 93px; }
.productivity { width: 86px; }
.work { width: 94px; border-right-color: #999; }
.big { width: 45px; flex-direction: column; justify-content: start; text-align: center; color: #444; }
.big > svg:first-child { width: 32px; height: 32px; margin-bottom: 5px; }
.big .arrow { margin-top: 1px; }
.component .tools { padding-left: 3px; }
.component .big:first-child { width: 49px; }
.component .big { width: 42px; }
.position .big { width: 57px; }
.manage .tools { padding-left: 0; }
.manage .big { width: 58px; }
.manage .big.wide { width: 60px; }
.work .big { width: 50px; }
.productivity .tools { padding: 4px 1px 0; }
.big.full { width: 100%; }
.productivity .big.full { width: auto; flex: 1; padding-left: 8px; }
.side { width: 9px; align-items: end; padding-bottom: 14px; }
.fx { height: 37px; font: italic 36px/32px "Liberation Serif", serif; color: #444; }
.fx sub { font-size: 30px; line-height: 0; vertical-align: -5px; }
.stack { display: flex; flex-direction: column; gap: 3px; flex: none; }
.stack > div { display: flex; height: 21px; }
.stack .sm, .stack .dd { height: 21px; border: 1px solid #d2d5da; background: #f4f5f7; }
.stack .sm { width: 24px; margin-left: 1px; }
.stack .sm svg { width: 18px; height: 18px; }
.stack .dd { width: 13px; border-left: 0; }
.stack .off .arrow { color: #999; }
.solo { width: 60px; background: linear-gradient(90deg, #e8e8e8, #f6f6f6); border-right: 2px solid #ccc; border-left: 1px solid #fff; padding-top: 4px; justify-content: space-between; }
.solo .expand { height: 14px; }

.work-area { flex: 1; display: flex; min-height: 0; background: #fefefe; }
.browser { width: 248px; flex: none; padding: 1px 4px 27px 3px; background: #ececec; border-right: 1px solid #666; display: flex; flex-direction: column; }
.grip { display: flex; gap: 4px; align-items: center; height: 14px; }
.grip i { flex: 1; height: 5px; border: solid #999; border-width: 1px 1px 1px 0; }
.grip button { width: 11px; }
.bhead { display: flex; justify-content: space-between; align-items: center; height: 20px; background: #a6a6a6; padding: 0 3px 0 8px; }
.bhead .model { font-weight: 700; font-size: 12px; color: #fff; gap: 4px; }
.btools { display: flex; height: 28px; align-items: center; color: #333; padding: 0 7px 0 1px; }
.btools .w36 { margin-right: -6px; }
.btools .bar { width: 1px; height: 18px; background: #999; margin: 0 12px 0 3px; }
.view { display: flex; align-items: center; gap: 3px; flex: 1; }
.view select { flex: 1; min-width: 0; appearance: none; border: 0; background: none; font: 12px/16px "Open Sans", sans-serif; color: #333; padding: 0; height: 18px; }
.find { color: #111; }
.tree { flex: 1; margin: 0; padding: 1px 0 0; list-style: none; border: 1px solid #666; background: #fff; font: 11px/18px "DejaVu Sans Condensed", "DejaVu Sans", sans-serif; color: #111; }
.tree li { display: flex; height: 18px; align-items: center; white-space: nowrap; }
.tree .g { width: 24px; height: 18px; }
.tree .g2 { width: 43px; }
.tree .ic { width: 16px; height: 16px; margin-right: 2px; }
.root { padding-left: 5px; }
.sel { background: #3a8ee6; color: #fff; line-height: 14px; }

.canvas { flex: 1; min-width: 0; position: relative; background: #fefefe; }
.model3d { position: absolute; inset: 0; width: 100%; height: 100%; }
.mdi { position: absolute; top: 7px; right: 4px; display: flex; gap: 8px; }
.cube { position: absolute; top: 39px; right: 17px; }
.cube-txt { font: 8px "Open Sans", sans-serif; fill: #8a8a8a; }
.nav { position: absolute; top: 110px; right: 3px; width: 35px; height: 199px; padding: 2px 0; border: 2px solid #b8b8b8; border-radius: 5px; background: #f2f2f2; display: flex; flex-direction: column; align-items: center; justify-content: space-between; }
.nav .arrow { color: #888; }
.nav button:first-child, .nav button:last-child { align-self: end; padding-right: 1px; }
.nav button:first-child { margin-bottom: 5px; }
.nav button:last-child { margin-top: 6px; }
.nav hr { width: 27px; margin: 0; border: 0; border-top: 1px solid #aaa; }
.triad { position: absolute; left: 22px; bottom: 27px; font: 11px "DejaVu Sans Condensed", sans-serif; }
.mark { position: absolute; right: 1px; bottom: 0; display: flex; align-items: end; font: 12px/16px "Open Sans", sans-serif; color: #777; }

.status { height: 21px; display: flex; align-items: center; padding: 3px 1px 0; border-top: 1px solid #ccc; background: linear-gradient(#f8f8f8, #b4b4b4); color: #111; }
.msg { flex: 1; }
.n { width: 38px; padding-left: 4px; font-size: 12px; }
.meter { width: 36px; height: 15px; margin-right: 8px; background: linear-gradient(90deg, #009400 14px, transparent 14px), linear-gradient(#444, #000 50%); }
```
